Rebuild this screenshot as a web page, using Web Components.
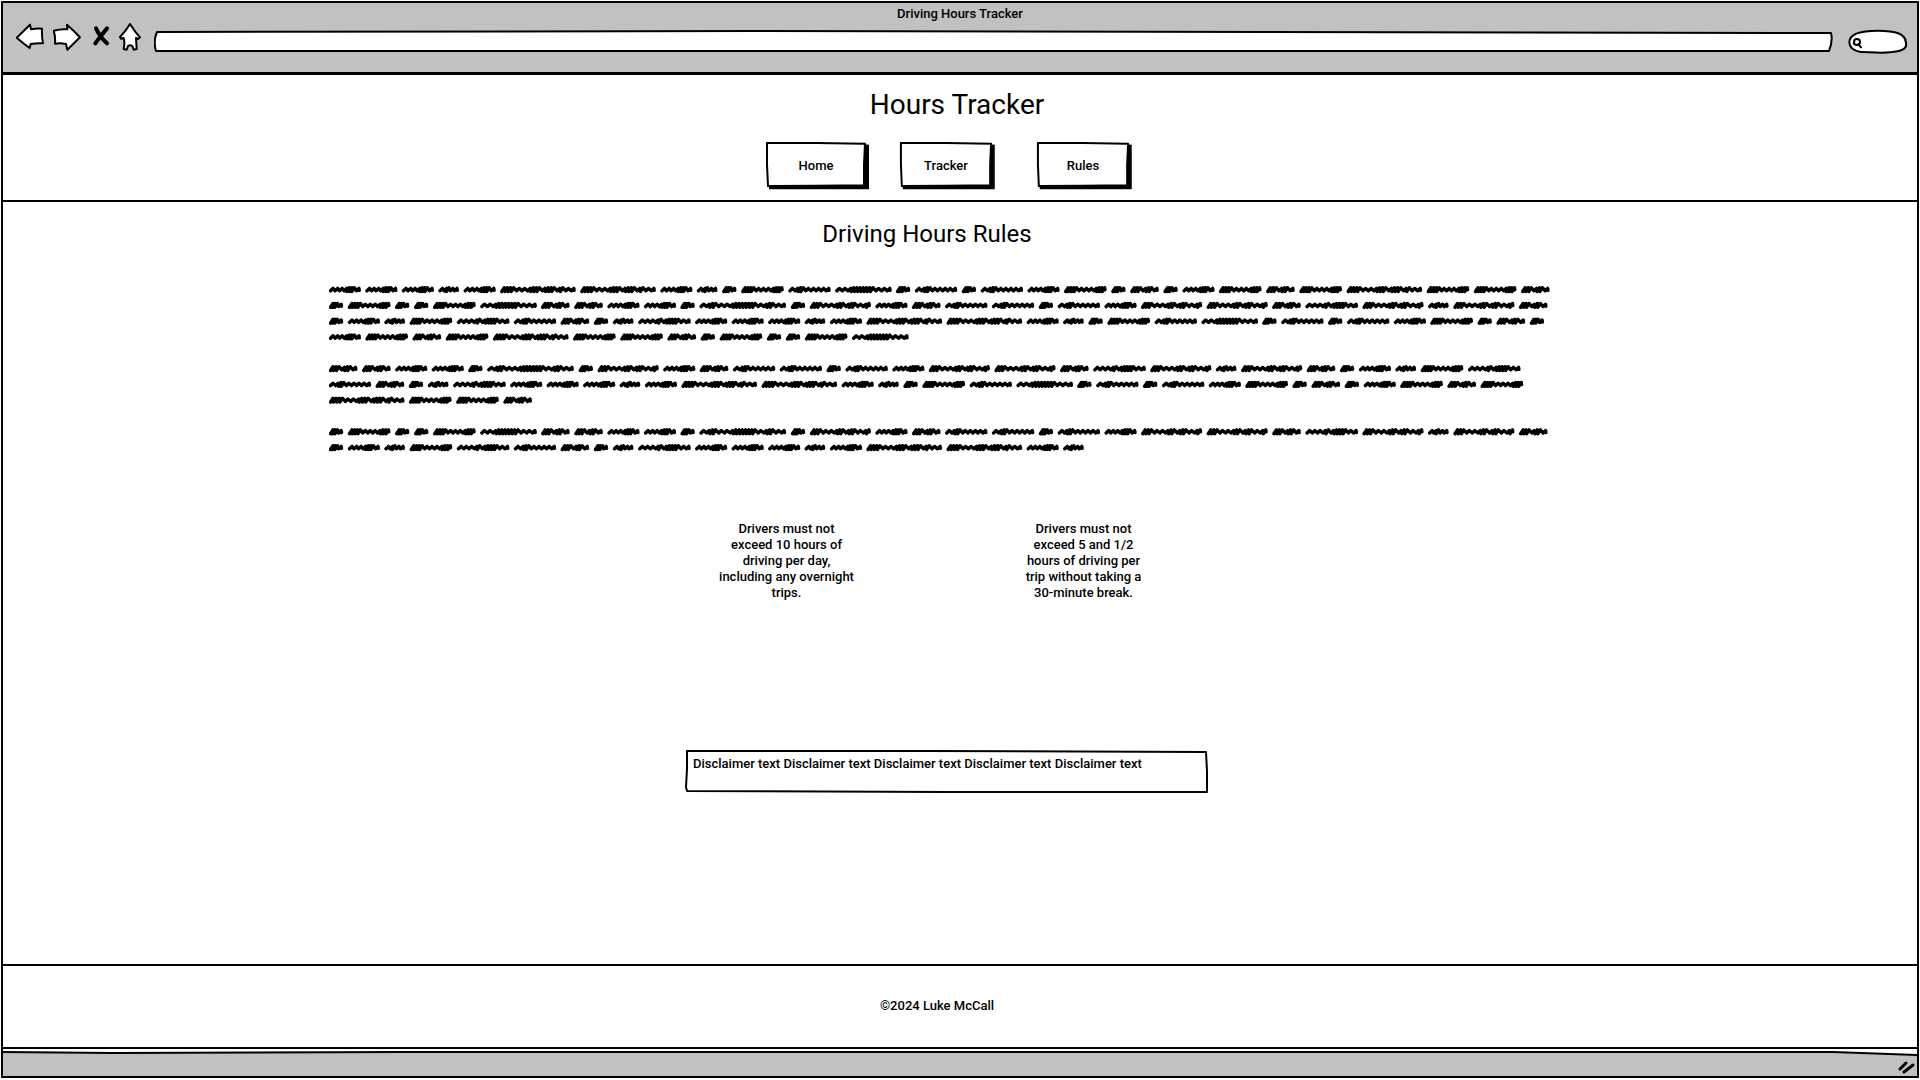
<!DOCTYPE html>
<html lang="en">
<head>
<meta charset="utf-8">
<title>Driving Hours Tracker</title>
<style>
  body { margin: 0; font: 500 13px/16px Roboto, "Liberation Sans", sans-serif; color: #000; background: #fff; }
</style>
</head>
<body>
<mock-window>
  <browser-bar slot="top" heading="Driving Hours Tracker"></browser-bar>
  <site-header heading="Hours Tracker">
    <nav-button>Home</nav-button>
    <nav-button>Tracker</nav-button>
    <nav-button class="last">Rules</nav-button>
  </site-header>
  <rules-page heading="Driving Hours Rules">
    <scribble-text slot="intro" lines="dddbdjjdbaefhafafdeacadecejeec aeaaehccddakaidcffafdiicgibic adbegfcabgdddbdjjdbaefhafafdeaca decejeecaeaaeh - ccddakaidcffafdiicgibicadbeg fcabgdddbdjjdbaefhafafdeacadece jeec - aeaaehccddakaidcffafdiicgibic adbegfcabgdddbdjjdb"></scribble-text>
    <rule-note slot="notes">Drivers must not exceed 10 hours of driving per day, including any overnight trips.</rule-note>
    <rule-note slot="notes">Drivers must not exceed 5 and 1/2 hours of driving per trip without taking a 30-minute break.</rule-note>
    <sketch-box slot="disclaimer">Disclaimer text Disclaimer text Disclaimer text Disclaimer text Disclaimer text</sketch-box>
  </rules-page>
  <site-footer>©2024 Luke McCall</site-footer>
  <status-bar slot="bottom"></status-bar>
</mock-window>

<script>
function define(name, html, setup) {
  const template = document.createElement('template');
  template.innerHTML = html;
  customElements.define(name, class extends HTMLElement {
    constructor() {
      super();
      this.attachShadow({ mode: 'open' }).append(template.content.cloneNode(true));
    }
    connectedCallback() {
      const heading = this.shadowRoot.querySelector('[data-heading]');
      if (heading) heading.textContent = this.getAttribute('heading');
      if (setup) setup(this);
    }
  });
}

define('mock-window', `
<style>
  :host { display: flex; flex-direction: column; box-sizing: border-box; min-height: 100vh; padding: 1px 1px 2px; }
  .frame { flex: 1; display: flex; flex-direction: column; border: 2px solid #000; }
  .page { flex: 1; display: flex; flex-direction: column; }
</style>
<div class="frame"><slot name="top"></slot><div class="page"><slot></slot></div><slot name="bottom"></slot></div>`);

define('browser-bar', `
<style>
  :host { display: block; background: #c1c1c1; border-bottom: 3px solid #000; }
  .title { text-align: center; padding: 3px 0 1px; }
  .tools { display: flex; align-items: center; gap: 9px; padding: 0 8px 13px 13px; }
  button { display: block; border: 0; padding: 0; background: none; }
  svg { display: block; height: 36px; fill: #fff; stroke: #000; stroke-width: 6; stroke-linejoin: round; stroke-linecap: round; }
  .url, .search { display: grid; align-items: center; }
  .url { flex: 1; margin: 0 5px 0 4px; }
  .url > *, .search > * { grid-area: 1 / 1; }
  .url svg { width: 100%; contain: size; }
  .search { width: 62px; }
  .url path { vector-effect: non-scaling-stroke; stroke-width: 2px; }
  input { border: 0; padding: 0 6px; background: none; min-width: 0; height: 16px; font: inherit; outline: 0; }
  .search input { padding-left: 18px; }
</style>
<div class="title" data-heading></div>
<div class="tools">
  <button aria-label="Back"><svg width="28" viewBox="48 69 84 108"><path d="M50 113L90 74L93 88Q112 84 126 86Q125 110 129 130Q110 129 92 132L89 144Q72 132 50 113Z"/></svg></button>
  <button aria-label="Forward"><svg width="28" viewBox="160 69 84 108"><path d="M162 92Q184 86 203 88L202 74Q222 91 241 112L203 149L199 132Q182 128 166 131Q168 111 162 92Z"/></svg></button>
  <button aria-label="Stop"><svg width="20" viewBox="272 69 60 108"><path fill="none" stroke-width="12" d="M290 85Q300 110 323 130M323 85Q306 105 288 130"/></svg></button>
  <button aria-label="Home"><svg width="22" viewBox="357 69 66 108"><path d="M390 72Q405 96 420 112L414 117L408 114L410 147L401 149L397 138Q390 134 384 138L380 149L371 147Q375 130 371 114L363 116L360 111Q379 91 390 72Z"/></svg></button>
  <div class="url">
    <svg viewBox="0 0 1680 36" preserveAspectRatio="none"><path d="M3 9L600 8L1678 10Q1680 18 1676 28L800 28L2 28Q-1 18 3 9Z"/></svg>
    <input aria-label="Address">
  </div>
  <div class="search">
    <svg width="62" viewBox="200 67 186 108"><path d="M207 124C208 98 240 90 292 90C345 90 376 98 377 128C380 146 362 152 330 155C290 159 256 152 240 154C220 150 207 142 207 124Z"/><path fill="none" stroke-width="6" d="M221 124a9 9 0 1 0 18 0a9 9 0 1 0 -18 0M225 132l-5 -3M234 130l8 10"/></svg>
    <input aria-label="Search">
  </div>
</div>`);

define('nav-button', `
<style>
  :host { display: block; }
  :host(.last) { margin-left: 11px; }
  button { display: grid; box-sizing: border-box; width: 100%; min-width: 92px; height: 45px; padding: 0; border: 0; background: none; font: inherit; color: inherit; }
  :host(:first-child) button { width: 100px; }
  svg, span { grid-area: 1 / 1; }
  span { place-self: center; padding-top: 2px; }
  svg { width: 100%; height: 100%; contain: size; overflow: visible; }
  path { fill: #fff; stroke: #000; stroke-width: 2px; vector-effect: non-scaling-stroke; stroke-linejoin: round; }
  .shade { fill: #000; stroke: none; }
</style>
<button>
  <svg viewBox="0 0 100 100" preserveAspectRatio="none"><path class="shade" d="M3 20L98 5L103 6L103 105L3 105Z"/><path d="M1 2L50 2L99 4L98 50L98 96L50 97L2 98L1 50Z"/></svg>
  <span><slot></slot></span>
</button>`);

define('site-header', `
<style>
  :host { display: block; padding: 14px 0 13px; border-bottom: 2px solid #000; }
  h1 { margin: 0 0 21px; padding-right: 6px; text-align: center; font-size: 28px; line-height: 32px; font-weight: 400; }
  nav { display: flex; justify-content: center; gap: 34px; padding-right: 25px; }
</style>
<h1 data-heading></h1>
<nav><slot></slot></nav>`);

define('rules-page', `
<style>
  :host { flex: 1; display: block; padding: 17px 16px 32px; }
  h2 { margin: 0 0 33px; padding-right: 66px; text-align: center; font-size: 24px; line-height: 30px; font-weight: 400; }
  .intro { display: flex; justify-content: center; padding-right: 40px; }
  .notes { display: flex; justify-content: center; gap: 161px; padding: 65px 50px 0 0; }
  .disclaimer { display: flex; justify-content: center; padding: 150px 27px 0 0; }
</style>
<h2 data-heading></h2>
<div class="intro"><slot name="intro"></slot></div>
<div class="notes"><slot name="notes"></slot></div>
<div class="disclaimer"><slot name="disclaimer"></slot></div>`);

define('rule-note', `
<style>
  :host { display: block; width: 136px; text-align: center; }
  p { margin: 0; }
</style>
<p><slot></slot></p>`);

define('sketch-box', `
<style>
  :host { display: grid; width: 521px; min-height: 42px; }
  svg, p { grid-area: 1 / 1; }
  p { margin: 0; padding: 5px 7px; }
  svg { width: 100%; height: 100%; contain: size; overflow: visible; }
  path { fill: #fff; stroke: #000; stroke-width: 2px; vector-effect: non-scaling-stroke; stroke-linejoin: round; }
</style>
<svg viewBox="0 0 521 42" preserveAspectRatio="none"><path d="M1 0L240 0L520 1L521 20L521 41L260 41L1 40L0 36L1 18Z"/></svg>
<p><slot></slot></p>`);

define('site-footer', `
<style>
  :host { display: block; padding: 32px 46px 33px 0; border: solid #000; border-width: 2px 0; text-align: center; }
</style>
<footer><slot></slot></footer>`);

define('status-bar', `
<style>
  :host { display: grid; grid-template-columns: 1fr 24px; height: 27px; }
  svg { display: block; width: 100%; height: 27px; }
  .bar { grid-area: 1 / 1 / 2 / 3; }
  .grip { grid-area: 1 / 2; z-index: 1; fill: none; stroke: #000; stroke-width: 3; stroke-linecap: round; }
  .bar path { fill: #c1c1c1; stroke: #000; stroke-width: 2px; vector-effect: non-scaling-stroke; }
</style>
<svg class="bar" viewBox="0 0 1914 27" preserveAspectRatio="none"><path d="M-3 3L110 4L400 3L1830 3L1917 6L1917 30L-3 30Z"/></svg>
<svg class="grip" viewBox="0 0 24 27"><path d="M7 20L13 14M11 23L20 16"/></svg>`);

/* Each letter names a scribbled word: its width, its advance, and its run of wide (T) and tight (D) strokes. */
const WORDS = {
  a: [13.7, 19, 'DDT'], b: [20, 25.3, 'TDTT'], c: [28, 33.2, 'DDTDDT'],
  d: [31.5, 36.5, 'TTTDDDT'], e: [42, 47.2, 'DDDTTTTDDD'], f: [41.7, 46.8, 'TDDTTTTT'],
  g: [52, 57, 'TTTDTDDDDTT'], h: [56, 60.8, 'TTDDDDDDDTTT'], i: [60.5, 65.6, 'DDTTTDDTDDTTD'],
  j: [75, 80.1, 'DDDTTTDDDTDDDTDTT'], k: [86, 91.4, 'TDDTTTDDDDDDDTTDDTT']
};
define('scribble-text', `
<style>
  :host { display: block; flex: 0 1 1222px; }
  svg { display: block; width: 100%; fill: none; stroke: #000; stroke-width: 3.4; stroke-linejoin: round; stroke-linecap: round; }
</style>
<svg role="img" aria-label="Placeholder paragraphs"><path/></svg>`, el => {
  const lines = el.getAttribute('lines').split(' ');
  const svg = el.shadowRoot.querySelector('svg');
  svg.setAttribute('viewBox', '0 0 1222 ' + Math.ceil(lines.length * 15.8));
  let d = '';
  lines.forEach((line, row) => {
    if (line === '-') return;
    const y = 7.6 + row * 15.8;
    let x = 0;
    for (const key of line) {
      const [width, advance, strokes] = WORDS[key];
      const steps = [...strokes].map(s => s === 'T' ? 4.4 : 2.5);
      const scale = (width - 5.5) / steps.reduce((a, b) => a + b);
      let px = x + 1.5;
      const rise = i => strokes[i] === 'D' ? 1.9 : 1.2;
      d += `M${px.toFixed(1)} ${(y + rise(0)).toFixed(1)}l2.5 ${-2 * rise(0)}`;
      steps.forEach((step, i) => {
        px += step * scale;
        const r = rise(i);
        d += `L${px.toFixed(1)} ${(y + r).toFixed(1)}l2.5 ${-2 * r}`;
      });
      d += 'l.3 2';
      x += advance;
    }
  });
  svg.querySelector('path').setAttribute('d', d);
});
</script>
</body>
</html>
